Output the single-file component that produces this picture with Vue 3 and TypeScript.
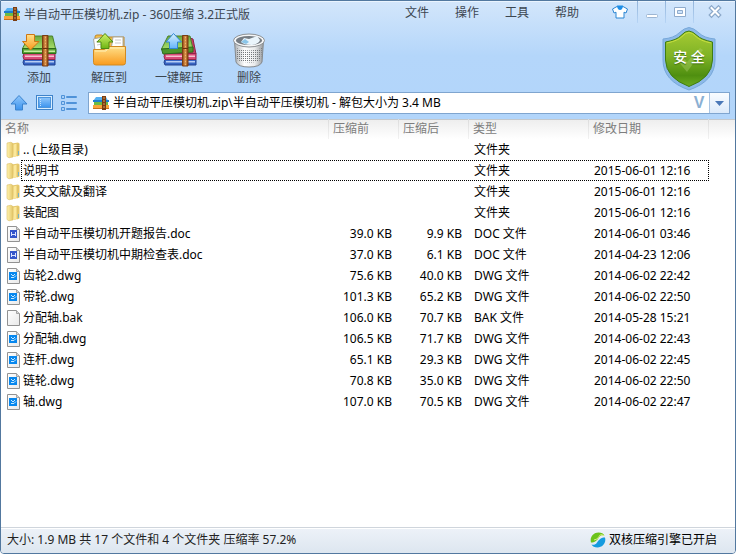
<script setup lang="ts">
import { ref } from 'vue'

type Kind = 'folder' | 'doc' | 'dwg' | 'bak'

interface Entry {
  name: string
  kind: Kind
  before: string
  after: string
  type: string
  date: string
}

const menus: string[] = ['文件', '操作', '工具', '帮助']

const tools: { label: string; icon: string }[] = [
  { label: '添加', icon: 'add' },
  { label: '解压到', icon: 'extract' },
  { label: '一键解压', icon: 'quick' },
  { label: '删除', icon: 'trash' },
]

const entries: Entry[] = [
  { name: '.. (上级目录)', kind: 'folder', before: '', after: '', type: '文件夹', date: '' },
  { name: '说明书', kind: 'folder', before: '', after: '', type: '文件夹', date: '2015-06-01 12:16' },
  { name: '英文文献及翻译', kind: 'folder', before: '', after: '', type: '文件夹', date: '2015-06-01 12:16' },
  { name: '装配图', kind: 'folder', before: '', after: '', type: '文件夹', date: '2015-06-01 12:16' },
  { name: '半自动平压模切机开题报告.doc', kind: 'doc', before: '39.0 KB', after: '9.9 KB', type: 'DOC 文件', date: '2014-06-01 03:46' },
  { name: '半自动平压模切机中期检查表.doc', kind: 'doc', before: '37.0 KB', after: '6.1 KB', type: 'DOC 文件', date: '2014-04-23 12:06' },
  { name: '齿轮2.dwg', kind: 'dwg', before: '75.6 KB', after: '40.0 KB', type: 'DWG 文件', date: '2014-06-02 22:42' },
  { name: '带轮.dwg', kind: 'dwg', before: '101.3 KB', after: '65.2 KB', type: 'DWG 文件', date: '2014-06-02 22:50' },
  { name: '分配轴.bak', kind: 'bak', before: '106.0 KB', after: '70.7 KB', type: 'BAK 文件', date: '2014-05-28 15:21' },
  { name: '分配轴.dwg', kind: 'dwg', before: '106.5 KB', after: '71.7 KB', type: 'DWG 文件', date: '2014-06-02 22:43' },
  { name: '连杆.dwg', kind: 'dwg', before: '65.1 KB', after: '29.3 KB', type: 'DWG 文件', date: '2014-06-02 22:45' },
  { name: '链轮.dwg', kind: 'dwg', before: '70.8 KB', after: '35.0 KB', type: 'DWG 文件', date: '2014-06-02 22:50' },
  { name: '轴.dwg', kind: 'dwg', before: '107.0 KB', after: '70.5 KB', type: 'DWG 文件', date: '2014-06-02 22:47' },
]

const path = ref('半自动平压模切机.zip\\半自动平压模切机 - 解包大小为 3.4 MB')
const focused = ref(1)
</script>

<template>
  <div class="window">
    <svg class="defs" aria-hidden="true">
      <defs>
        <linearGradient id="gGreen" x1="0" y1="0" x2="0" y2="1">
          <stop offset="0" stop-color="#6cab3c" /><stop offset="1" stop-color="#a5dc6c" />
        </linearGradient>
        <linearGradient id="gBelt" x1="0" y1="0" x2="1" y2="0">
          <stop offset="0" stop-color="#8a4310" /><stop offset=".5" stop-color="#e09a50" /><stop offset="1" stop-color="#8a4310" />
        </linearGradient>
        <linearGradient id="gOrange" x1="0" y1="0" x2="0" y2="1">
          <stop offset="0" stop-color="#ffe08a" /><stop offset="1" stop-color="#f99a1c" />
        </linearGradient>
        <linearGradient id="gArrowGreen" x1="0" y1="0" x2="0" y2="1">
          <stop offset="0" stop-color="#d2f26a" /><stop offset="1" stop-color="#6db512" />
        </linearGradient>
        <linearGradient id="gArrowBlue" x1="0" y1="0" x2="0" y2="1">
          <stop offset="0" stop-color="#d8f0ff" /><stop offset="1" stop-color="#64b4f8" />
        </linearGradient>
        <linearGradient id="gNav" x1="0" y1="0" x2="0" y2="1">
          <stop offset="0" stop-color="#8fc6fb" /><stop offset="1" stop-color="#3b93ee" />
        </linearGradient>
        <linearGradient id="gCan" x1="0" y1="0" x2="1" y2="0">
          <stop offset="0" stop-color="#aeb2b5" /><stop offset=".35" stop-color="#ffffff" /><stop offset=".7" stop-color="#e9ebec" /><stop offset="1" stop-color="#96999c" />
        </linearGradient>
        <linearGradient id="gShield" x1="0" y1="0" x2="0" y2="1">
          <stop offset="0" stop-color="#a6ca32" /><stop offset=".45" stop-color="#7fb326" /><stop offset=".8" stop-color="#4f8f10" /><stop offset="1" stop-color="#6cac20" />
        </linearGradient>
        <linearGradient id="gFolder" x1="0" y1="0" x2="1" y2="0">
          <stop offset="0" stop-color="#fff3ae" /><stop offset="1" stop-color="#e3c566" />
        </linearGradient>
        <linearGradient id="gPage" x1="0" y1="0" x2="1" y2="1">
          <stop offset="0" stop-color="#ffffff" /><stop offset="1" stop-color="#e9e9e9" />
        </linearGradient>
        <pattern id="pMesh" width="2" height="2" patternUnits="userSpaceOnUse">
          <rect width="1" height="1" fill="#74787b" />
        </pattern>
      </defs>
      <symbol id="archive" viewBox="0 0 16 14">
        <path d="M3 1h10l2 3.500H.5z" fill="#55b0f2" />
        <path d="M0 4h16v2H0z" fill="#1c7fce" />
        <path d="M1 6h14v3H1z" fill="#6cbb42" />
        <path d="M0 9h16v4H0z" fill="#f7a53a" />
        <path d="M0 12h16v1H0z" fill="#c96f1c" />
        <path d="M9 0h4v14H9z" fill="#7a3d12" />
        <path d="M11 1v12" stroke="#d89d5b" stroke-dasharray="2 1" />
      </symbol>
      <symbol id="books" viewBox="0 0 36 36">
        <path d="M3 27.500h31v5.500H3q-2-2.700 0-5.500z" fill="#3966c4" stroke="#213f8e" />
        <path d="M4 29h29v1.500H4z" fill="#b7cdf4" />
        <path d="M3 21.500h31v6H3q-2-3 0-6z" fill="#d84b78" stroke="#92244a" />
        <path d="M4 23.500h29v1.500H4z" fill="#f7c0d0" />
        <path d="M8 4h23.500l3 12.500h-33z" fill="url(#gGreen)" stroke="#4a812a" />
        <path d="M1.500 16.500h33.500v5H1.500z" fill="#57a234" stroke="#2c6b1b" />
        <path d="M3 18.500h31v1.500H3z" fill="#c6eca0" />
      </symbol>
      <symbol id="belt" viewBox="0 0 36 36">
        <path d="M21.500 3.500h5.500v30.500h-5.500z" fill="url(#gBelt)" stroke="#7a3d12" />
        <path d="M22 16.500h5" stroke="#6a320d" />
        <path d="M24.500 5v28" stroke="#f0b46c" stroke-dasharray="1 2" />
      </symbol>
    </svg>

    <header class="chrome">
      <div class="titlebar">
        <svg class="app-icon"><use href="#archive" /></svg>
        <h1>半自动平压模切机.zip - 360压缩 3.2正式版</h1>
        <nav class="menus">
          <button v-for="m in menus" :key="m" type="button">{{ m }}</button>
        </nav>
        <div class="controls">
          <button type="button" aria-label="换肤" class="skin">
            <svg width="18" height="16" viewBox="0 0 18 16">
              <path d="M6 2.500 1.500 5l1.500 4 2-.8v5.800h8V8.200l2 .8 1.500-4L12 2.500Q9 5 6 2.500z" fill="#fff" stroke="#2b86d3" stroke-linejoin="round" />
              <path d="M6 1.500h6Q11.500 6 9 6T6 1.500z" fill="#1f8fe8" />
            </svg>
          </button>
          <button type="button" aria-label="最小化">
            <svg width="13" height="14" viewBox="0 0 13 14"><rect x="1.500" y="9.500" width="11" height="3" rx="1" fill="#fff" stroke="#9db6d3" /></svg>
          </button>
          <button type="button" aria-label="最大化">
            <svg width="13" height="14" viewBox="0 0 13 14">
              <path d="M1.500 2.500h11v9h-11zM4.500 5.500h5v3h-5z" fill="#fff" fill-rule="evenodd" stroke="#8fabcc" />
            </svg>
          </button>
          <button type="button" aria-label="关闭" class="close">
            <svg width="14" height="14" viewBox="0 0 14 14">
              <path d="M3.500 3l7 7M10.500 3l-7 7" stroke="#8ba8c9" stroke-width="4.500" stroke-linecap="square" />
              <path d="M3.500 3l7 7M10.500 3l-7 7" stroke="#fff" stroke-width="2" stroke-linecap="square" />
            </svg>
          </button>
        </div>
      </div>

      <div class="toolbar">
        <button v-for="t in tools" :key="t.icon" type="button" class="tool">
          <svg width="36" height="36" viewBox="0 0 36 36">
            <template v-if="t.icon === 'add'">
              <use href="#books" /><use href="#belt" />
              <path d="M5.500 2.500h8v7h4.500L9.500 18 1.500 9.500h4z" fill="url(#gOrange)" stroke="#cf7613" stroke-linejoin="round" />
            </template>
            <template v-else-if="t.icon === 'extract'">
              <path d="M4 17V5q0-2 2-2h5l2 2h20v13z" fill="#f2bd4a" stroke="#bd862a" />
              <path d="M2.500 7l9-2 4 13H4zM22 5h10v13H20z" fill="#fff" stroke="#a9a9a0" />
              <path d="M24 8h6M24 11h6M5 10l5-1M6 13l5-1" stroke="#c8c8c8" />
              <path d="M2.500 17.500h11l2-3h19v16q0 2.500-2.500 2.500H5q-2.500 0-2.500-2.500z" fill="url(#gOrange)" stroke="#d18a22" />
              <path d="M4 19h11l2-3h16" fill="none" stroke="#fff1b8" />
              <path d="M14 1.500l8 8.500h-4v6.500h-8V10H6z" fill="url(#gArrowGreen)" stroke="#4f8a12" stroke-linejoin="round" />
            </template>
            <template v-else-if="t.icon === 'quick'">
              <path d="M29 6l3 1 3 15H6v-6z" fill="#ca3b66" stroke="#8d2447" />
              <path d="M4 27.500h31v5.500H4q-2-2.700 0-5.500z" fill="#3966c4" stroke="#213f8e" />
              <path d="M5 29h29v1.500H5z" fill="#b7cdf4" />
              <path d="M4 21.500h31v6H4q-2-3 0-6z" fill="#d84b78" stroke="#92244a" />
              <path d="M5 23.500h29v1.500H5z" fill="#f7c0d0" />
              <path d="M7 4h22l3 13H.5z" fill="url(#gGreen)" stroke="#4a812a" />
              <path d="M.5 17l31.500-2v5L2 22z" fill="#4c962c" stroke="#2c6b1b" />
              <use href="#belt" />
              <path d="M12.500 1.500l8 8.500h-4v6.500h-8V10H5z" fill="url(#gArrowBlue)" stroke="#3186d2" stroke-linejoin="round" />
            </template>
            <template v-else>
              <path d="M3.500 9l1.500 21q2 5 13 5t13-5l1.500-21z" fill="url(#gCan)" stroke="#85898c" />
              <path d="M5 16q13 5 26 0l-1 12q-12 5-24 0z" fill="url(#pMesh)" />
              <ellipse cx="18" cy="8.500" rx="15.500" ry="6.500" fill="#f5f6f7" stroke="#8d9194" />
              <ellipse cx="18" cy="8.500" rx="13" ry="4.500" fill="#757c83" />
              <path d="M10 10l3-4 5 1 8-3 3 4q-1 4-8 5-8 0-11-3z" fill="#eaf5fc" />
              <path d="M10 10l4-3 4 3-3 2z" fill="#8bc5e8" />
            </template>
          </svg>
          <span>{{ t.label }}</span>
        </button>
        <div class="shield">
          <svg width="54" height="64" viewBox="0 0 54 64" aria-hidden="true">
            <path d="M27 .5Q32 1 37 6t16 6v21Q53 54 27 63 1 54 1 33V12q11-1 16-6T27 .5z" fill="#8cb9e8" stroke="#78a8d9" />
            <path d="M27 4q4 .5 8 4.500T50.500 15v18Q50 51 27 59.500 4 51 3.500 33V15Q15 13 19 8.500T27 4z" fill="url(#gShield)" stroke="#3f7d12" />
            <path d="M27 5.500q3.500 0 7 4T49 16M27 5.500q-3.500 0-7 4T5 16" fill="none" stroke="#c9e03f" />
            <path d="M16 34l5-4 4 5 13-14 3 2-16 22z" fill="#b7d77b" opacity=".35" />
          </svg>
          <span>安 全</span>
        </div>
      </div>

      <div class="location">
        <div class="nav-buttons">
          <button type="button" aria-label="向上">
            <svg width="18" height="18" viewBox="0 0 18 18"><path d="M9 1.500l8 8.500h-4.500v6h-7v-6H1z" fill="url(#gNav)" stroke="#3b83ce" stroke-linejoin="round" /></svg>
          </button>
          <button type="button" aria-label="预览">
            <svg width="18" height="18" viewBox="0 0 18 18">
              <rect x="1.500" y="1.500" width="16" height="14" fill="#d8edff" stroke="#3f83ca" />
              <rect x="3.500" y="3.500" width="12" height="10" fill="url(#gNav)" stroke="#4b94dc" />
              <path d="M5.500 5v7" stroke="#c5e2fb" stroke-dasharray="1 1" />
            </svg>
          </button>
          <button type="button" aria-label="列表">
            <svg width="18" height="18" viewBox="0 0 18 18">
              <path d="M1.500 1.500h3v3h-3zM1.500 7.500h3v3h-3zM1.500 13.500h3v3h-3zM6.500 2.500h10v1h-10zM6.500 8.500h10v1h-10zM6.500 14.500h10v1h-10z" fill="#a9d0f7" stroke="#4f92d8" />
            </svg>
          </button>
        </div>
        <div class="address">
          <svg class="app-icon"><use href="#archive" /></svg>
          <input v-model="path" type="text" aria-label="路径" />
          <button type="button" class="verify">V</button>
          <button type="button" class="drop" aria-label="展开">
            <svg width="9" height="5" viewBox="0 0 9 5"><path d="M0 0h9L4.500 5z" fill="#4a78b8" /></svg>
          </button>
        </div>
      </div>
    </header>

    <main class="listing">
      <table>
        <colgroup>
          <col />
          <col class="c-size" />
          <col class="c-size" />
          <col class="c-wide" />
          <col class="c-wide" />
          <col class="c-rest" />
        </colgroup>
        <thead>
          <tr>
            <th>名称</th>
            <th>压缩前</th>
            <th>压缩后</th>
            <th>类型</th>
            <th>修改日期</th>
            <td></td>
          </tr>
        </thead>
        <tbody>
          <tr v-for="(e, i) in entries" :key="e.name" :class="{ focused: i === focused }" @click="focused = i">
            <td>
              <div class="name">
                <svg width="16" height="18" viewBox="0 0 16 18" aria-hidden="true">
                  <template v-if="e.kind === 'folder'">
                    <path d="M6 2.500l6-1 1.500 1v12l-6 1.500z" fill="#e6c86c" />
                    <path d="M1 2l4-.8 2 1.300V16l-4 .8-2-1.300z" fill="url(#gFolder)" stroke="#dcc06a" stroke-width=".6" />
                    <path d="M7.500 3.500l3-.8V15l-3 1z" fill="#fbe89a" />
                    <path d="M11 3.500l2-.5v11.500l-2 1z" fill="#e3c566" />
                    <path d="M12.500 10v4" stroke="#75b2c6" />
                  </template>
                  <template v-else>
                    <path d="M1.500 1.500h9l3 3v12h-12z" fill="url(#gPage)" stroke="#929292" />
                    <path d="M10.500 1.500v3h3" fill="#d5d5d5" stroke="#a5a5a5" />
                    <template v-if="e.kind === 'doc'">
                      <rect x="4" y="5" width="7" height="8" fill="#3455ca" />
                      <path d="M5.500 7v4M9.500 7v4M5.500 9.500h4" fill="none" stroke="#dce4ff" />
                    </template>
                    <template v-else-if="e.kind === 'dwg'">
                      <rect x="3" y="5" width="8" height="8" fill="#0787ee" />
                      <path d="M5 7l2 2 2-2M5 10.500h3l2-2" fill="none" stroke="#c8eaff" />
                    </template>
                  </template>
                </svg>
                <span>{{ e.name }}</span>
              </div>
            </td>
            <td class="num">{{ e.before }}</td>
            <td class="num">{{ e.after }}</td>
            <td>{{ e.type }}</td>
            <td>{{ e.date }}</td>
            <td></td>
          </tr>
        </tbody>
      </table>
    </main>

    <footer class="status">
      <span>大小: 1.9 MB 共 17 个文件和 4 个文件夹 压缩率 57.2%</span>
      <span class="engine">
        <svg width="16" height="16" viewBox="0 0 16 16" aria-hidden="true">
          <path d="M1 10.500C-.5 5 3.500.5 8.500.5c3 0 5 1.200 6 3C10 2.500 9.500 5 7.500 7.500S3 10.500 1 10.500z" fill="#6cc31b" />
          <path d="M4 8q4-.5 5-3.500T14 3.500" fill="none" stroke="#d3f07a" />
          <path d="M15 5.500c1.500 5.500-2.500 10-7.500 10-3 0-5-1.200-6-3 4.500 1 5-1.500 7-4s4.500-3 6.500-3z" fill="#159bdf" />
        </svg>
        双核压缩引擎已开启
      </span>
    </footer>
  </div>
</template>

<style>
body {
  background: #fff;
}
</style>

<style scoped>
.window {
  box-sizing: border-box;
  min-height: 100vh;
  display: flex;
  flex-direction: column;
  border: 1px solid #52789f;
  border-radius: 0 0 4px 4px;
  overflow: hidden;
  background: #fff;
  color: #000;
  font: 12px/20px "Noto Sans", "Noto Sans CJK SC", sans-serif;
}

.defs {
  position: absolute;
  width: 0;
  height: 0;
}

button {
  display: flex;
  align-items: center;
  justify-content: center;
  padding: 0;
  border: 0;
  background: none;
  color: inherit;
  font: inherit;
}

svg {
  display: block;
  flex: none;
}

.chrome {
  background: linear-gradient(#d3e6fb, #b4d6fa 55px, #b2d5fa);
  box-shadow: inset 0 1px #eaf4fe;
  color: #3c4650;
}

.titlebar {
  display: flex;
  height: 26px;
  padding-left: 3px;
}

.app-icon {
  width: 16px;
  height: 14px;
  align-self: center;
}

h1 {
  flex: 1;
  margin: 0;
  padding-left: 4px;
  font-size: 12px;
  font-weight: 400;
  line-height: 28px;
  white-space: nowrap;
}

.menus {
  display: flex;
  gap: 26px;
  margin-right: 32px;
}

.menus button {
  height: 24px;
}

.controls {
  display: flex;
}

.controls button {
  width: 28px;
  height: 22px;
  border-right: 1px solid #9fc0e3;
  border-image: linear-gradient(#90b2d8, #b8d6f7) 1;
  box-sizing: border-box;
}

.controls .skin {
  width: 27px;
  padding-right: 8px;
}

.controls .close {
  width: 41px;
  border: 0;
}

.toolbar {
  display: flex;
  height: 64px;
  padding-left: 3px;
}

.tool {
  flex-direction: column;
  justify-content: flex-start;
  width: 70px;
  padding-top: 5px;
}

.shield {
  display: grid;
  place-items: center;
  margin-left: auto;
  padding-right: 19px;
}

.shield > * {
  grid-area: 1 / 1;
}

.shield span {
  padding-bottom: 4px;
  color: #fff;
  font-size: 14px;
  font-weight: 500;
  text-shadow: 0 1px 1px #3d6d10;
}

.location {
  display: flex;
  gap: 9px;
  padding: 1px 5px 5px 9px;
}

.nav-buttons {
  display: flex;
  gap: 7px;
  width: 69px;
}

.address {
  flex: 1;
  display: flex;
  height: 22px;
  box-sizing: border-box;
  padding-left: 4px;
  border: 1px solid #7fa5cf;
  background: #fff;
}

.address input {
  flex: 1;
  min-width: 0;
  padding: 0 4px;
  border: 0;
  outline: 0;
  background: none;
  color: #000;
  font: inherit;
}

.verify {
  width: 20px;
  color: #8bb0d3;
  font: 700 16px/20px "Liberation Sans", Arial, sans-serif;
}

.address .drop {
  width: 20px;
  border-left: 1px solid #a9c5e4;
  background: linear-gradient(#f9fcff, #dceafa);
}

.listing {
  flex: 1;
}

table {
  width: 100%;
  table-layout: fixed;
  border-collapse: collapse;
}

.c-size {
  width: 70px;
}

.c-wide {
  width: 120px;
}

.c-rest {
  width: 26px;
}

thead tr {
  background: linear-gradient(#c4c8cc 1px, #eeeeee 1px, #fff);
}

th {
  padding: 0 4px;
  height: 20px;
  background: linear-gradient(#dcdcdc, #f2f2f2) right / 1px 100% no-repeat;
  color: #7d7d7d;
  font-weight: 400;
  text-align: left;
}

td {
  padding: 0 0 0 5px;
  white-space: nowrap;
}

tbody td {
  height: 21px;
}

tbody tr {
  position: relative;
}

tbody .num {
  padding-right: 7px;
  text-align: right;
}

.name {
  display: flex;
  align-items: center;
  gap: 1px;
}

.focused td:first-child::after {
  content: "";
  position: absolute;
  inset: 0 26px 0 20px;
  border: 1px dotted #000;
}

.status {
  display: flex;
  justify-content: space-between;
  padding: 2px 18px 3px 6px;
  border-top: 1px solid #cfd5dc;
  box-shadow: inset 0 1px #fff;
  background: linear-gradient(#edf2f8, #dde6f0);
  color: #222;
}

.engine {
  display: flex;
  align-items: center;
  gap: 3px;
  color: #000;
}
</style>
